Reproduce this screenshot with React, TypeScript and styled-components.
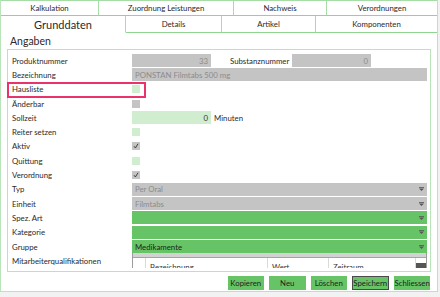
import React from "react";
import styled, { createGlobalStyle } from "styled-components";

const GlobalStyle = createGlobalStyle`
    html, body {
        margin: 0;
        padding: 0;
        background: #f2f2f2;
        font-family: "Lato", "Open Sans", sans-serif;
    }
`;

const Screen = styled.div`
    position: relative;
    width: 440px;
    height: 297px;
    background: #f2f2f2;
    overflow: hidden;
`;

const Panel = styled.div`
    width: 438px;
    height: 292px;
    box-sizing: border-box;
    background: #ffffff;
    border: 1px solid #b9e4b9;
    border-top: none;
    display: flex;
    flex-direction: column;
`;

const TabRow = styled.div<{ $height: number; $top?: boolean }>`
    display: flex;
    height: ${(p) => p.$height}px;
    box-sizing: border-box;
    border-top: ${(p) => (p.$top ? "1px solid #a6dca6" : "none")};
`;

const Tab = styled.div<{ $width?: number; $active?: boolean }>`
    flex: ${(p) => (p.$width ? `0 0 ${p.$width}px` : "1 1 auto")};
    box-sizing: border-box;
    border-right: 1px solid #a6dca6;
    border-bottom: ${(p) => (p.$active ? "1px solid transparent" : "1px solid #8fd48f")};
    display: flex;
    align-items: center;
    justify-content: center;
    font-size: ${(p) => (p.$active ? "11px" : "7.8px")};
    color: #2a2a2a;
    &:last-child {
        border-right: none;
    }
`;

const Content = styled.div`
    display: flex;
    flex-direction: column;
    padding: 0 6px 0 6px;
`;

const Title = styled.div`
    height: 16px;
    line-height: 16px;
    padding-left: 3px;
    font-size: 10.5px;
    color: #2a2a2a;
`;

const GroupBox = styled.div`
    height: 223px;
    box-sizing: border-box;
    border: 1px solid #b9e4b9;
    padding: 3.5px 3px 0 4px;
    overflow: hidden;
`;

const Form = styled.div`
    display: grid;
    grid-template-columns: 120px 1fr;
    grid-auto-rows: 14.3px;
    align-items: center;
`;

const Label = styled.div<{ $top?: boolean }>`
    font-size: 7.8px;
    color: #2a2a2a;
    white-space: nowrap;
    align-self: ${(p) => (p.$top ? "start" : "center")};
    padding-top: ${(p) => (p.$top ? "2px" : "0")};
`;

const FieldLine = styled.div`
    display: flex;
    align-items: center;
    height: 13px;
`;

const Input = styled.div<{ $width?: number; $tone: "gray" | "light" | "green"; $right?: boolean }>`
    ${(p) => (p.$width ? `width: ${p.$width}px; flex: none;` : "flex: 1;")}
    height: 13px;
    box-sizing: border-box;
    padding: 0 3px;
    display: flex;
    align-items: center;
    justify-content: ${(p) => (p.$right ? "flex-end" : "space-between")};
    font-size: 7.8px;
    white-space: nowrap;
    overflow: hidden;
    background: ${(p) => (p.$tone === "gray" ? "#c4c4c4" : p.$tone === "light" ? "#d0edd0" : "#66c466")};
    color: ${(p) => (p.$tone === "gray" ? "#8c8c8c" : p.$tone === "light" ? "#333" : "#1e1e1e")};
`;

const InlineLabel = styled.span<{ $width?: number; $left: number }>`
    ${(p) => (p.$width ? `width: ${p.$width}px;` : "")}
    flex: none;
    font-size: 7.8px;
    color: #2a2a2a;
    margin-left: ${(p) => p.$left}px;
    white-space: nowrap;
`;

const Check = styled.div<{ $tone: "gray" | "light" }>`
    width: 8px;
    height: 8px;
    background: ${(p) => (p.$tone === "gray" ? "#c4c4c4" : "#d0edd0")};
    display: flex;
    align-items: center;
    justify-content: center;
`;

const Arrow = () => (
    <svg width="5" height="4" viewBox="0 0 5 4">
        <rect x="0" y="0" width="5" height="0.8" fill="#555" />
        <path d="M0 1.4 L5 1.4 L2.5 4 Z" fill="#555" />
    </svg>
);

const Tick = () => (
    <svg width="6" height="6" viewBox="0 0 6 6">
        <path d="M1 3.2 L2.4 5 L5 0.8" stroke="#333" strokeWidth="0.9" fill="none" />
    </svg>
);

const QualGrid = styled.div`
    align-self: start;
    margin-top: -1px;
    height: 15px;
    box-sizing: border-box;
    border-left: 1px solid #9c9c9c;
    border-right: 1px solid #9c9c9c;
    background: #fff;
    overflow: hidden;
`;

const GridBar = styled.div`
    height: 4px;
    background: #d2d2d2;
    border-bottom: 1px solid #a4a4a4;
`;

const GridHeader = styled.div`
    display: grid;
    grid-template-columns: 13px 122px 61px 1fr 10px;
    height: 12px;
`;

const HeadCell = styled.div`
    border-right: 1px solid #dadada;
    font-size: 7.8px;
    line-height: 10px;
    color: #333;
    padding: 4px 0 0 4px;
    white-space: nowrap;
    overflow: hidden;
`;

const ScrollKnob = styled.div`
    margin-top: 5px;
    background: #555;
`;

const ButtonBar = styled.div`
    display: flex;
    justify-content: flex-end;
    gap: 5px;
    padding: 4px 1px 0 0;
`;

const Button = styled.button<{ $focused?: boolean }>`
    width: 36.5px;
    height: 14px;
    box-sizing: border-box;
    padding: 0;
    background: #66c466;
    border: 1px solid ${(p) => (p.$focused ? "#4a4a4a" : "#66c466")};
    font-family: inherit;
    font-size: 7.8px;
    color: #1e1e1e;
    white-space: nowrap;
`;

const Highlight = styled.div`
    position: absolute;
    left: 7px;
    top: 82px;
    width: 139px;
    height: 16px;
    box-sizing: border-box;
    border: 2px solid #e8336b;
    pointer-events: none;
`;

const topTabs = [
    { label: "Kalkulation", width: 98 },
    { label: "Zuordnung Leistungen", width: 135 },
    { label: "Nachweis", width: 93 },
    { label: "Verordnungen" },
];

const subTabs = [
    { label: "Grunddaten", width: 125, active: true },
    { label: "Details", width: 96 },
    { label: "Artikel", width: 94 },
    { label: "Komponenten" },
];

const combos = [
    { label: "Typ", value: "Per Oral", tone: "gray" as const },
    { label: "Einheit", value: "Filmtabs", tone: "gray" as const },
    { label: "Spez. Art", value: "", tone: "green" as const },
    { label: "Kategorie", value: "", tone: "green" as const },
];

const App = () => {
    return (
        <Screen>
            <GlobalStyle />
            <Panel>
                <TabRow $height={16} $top>
                    {topTabs.map((t) => (
                        <Tab key={t.label} $width={t.width}>{t.label}</Tab>
                    ))}
                </TabRow>
                <TabRow $height={17}>
                    {subTabs.map((t) => (
                        <Tab key={t.label} $width={t.width} $active={t.active}>{t.label}</Tab>
                    ))}
                </TabRow>
                <Content>
                    <Title>Angaben</Title>
                    <GroupBox>
                        <Form>
                            <Label>Produktnummer</Label>
                            <FieldLine>
                                <Input $width={79} $tone="gray" $right>33</Input>
                                <InlineLabel $left={19} $width={62}>Substanznummer</InlineLabel>
                                <Input $width={79} $tone="gray" $right>0</Input>
                            </FieldLine>

                            <Label>Bezeichnung</Label>
                            <Input $tone="gray">PONSTAN Filmtabs 500 mg</Input>

                            <Label>Hausliste</Label>
                            <Check $tone="light" />

                            <Label>Änderbar</Label>
                            <Check $tone="gray" />

                            <Label>Sollzeit</Label>
                            <FieldLine>
                                <Input $width={79} $tone="light" $right>0</Input>
                                <InlineLabel $left={3}>Minuten</InlineLabel>
                            </FieldLine>

                            <Label>Reiter setzen</Label>
                            <Check $tone="light" />

                            <Label>Aktiv</Label>
                            <Check $tone="gray"><Tick /></Check>

                            <Label>Quittung</Label>
                            <Check $tone="light" />

                            <Label>Verordnung</Label>
                            <Check $tone="gray"><Tick /></Check>

                            {combos.map((c) => (
                                <React.Fragment key={c.label}>
                                    <Label>{c.label}</Label>
                                    <Input $tone={c.tone}>
                                        <span>{c.value}</span>
                                        <Arrow />
                                    </Input>
                                </React.Fragment>
                            ))}

                            <Label>Gruppe</Label>
                            <Input $tone="green">
                                <span>Medikamente</span>
                                <Arrow />
                            </Input>

                            <Label $top>Mitarbeiterqualifikationen</Label>
                            <QualGrid>
                                <GridBar />
                                <GridHeader>
                                    <HeadCell />
                                    <HeadCell>Bezeichnung</HeadCell>
                                    <HeadCell>Wert</HeadCell>
                                    <HeadCell>Zeitraum</HeadCell>
                                    <ScrollKnob />
                                </GridHeader>
                            </QualGrid>
                        </Form>
                    </GroupBox>
                    <ButtonBar>
                        <Button>Kopieren</Button>
                        <Button>Neu</Button>
                        <Button>Löschen</Button>
                        <Button $focused>Speichern</Button>
                        <Button>Schliessen</Button>
                    </ButtonBar>
                </Content>
            </Panel>
            <Highlight />
        </Screen>
    );
};

export default App;
